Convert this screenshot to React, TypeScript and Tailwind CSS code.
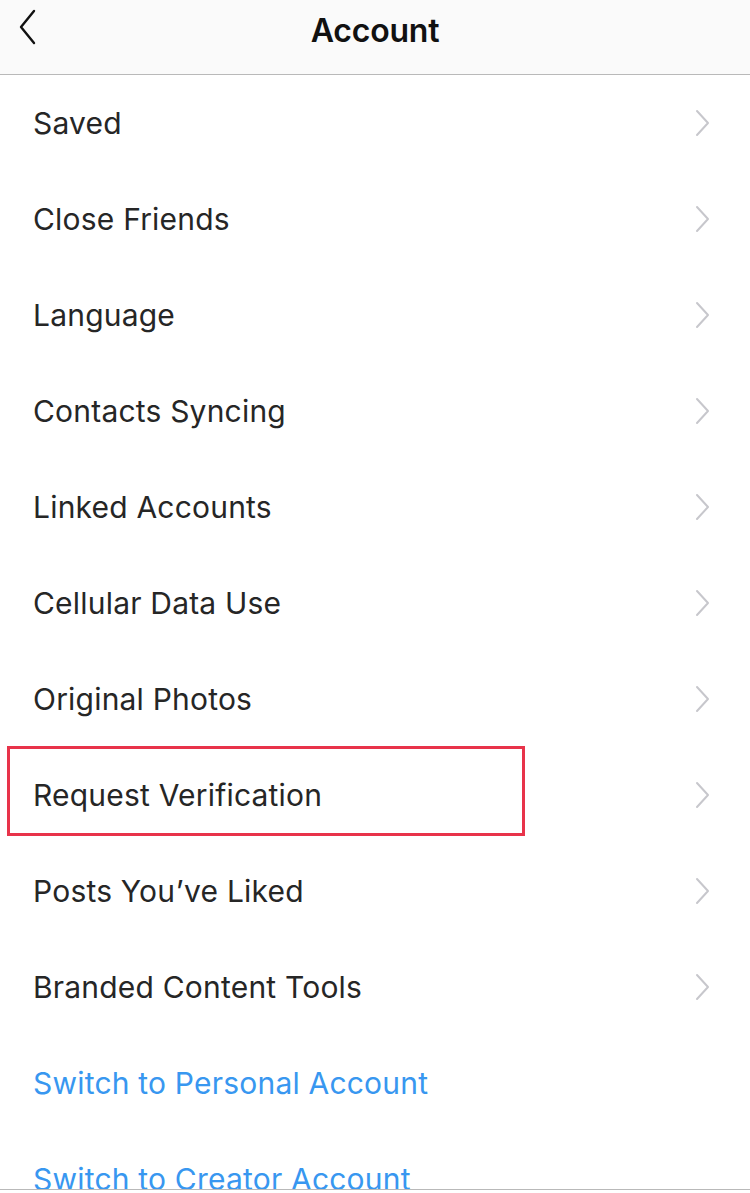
import React from "react";

const items = [
  "Saved",
  "Close Friends",
  "Language",
  "Contacts Syncing",
  "Linked Accounts",
  "Cellular Data Use",
  "Original Photos",
  "Request Verification",
  "Posts You’ve Liked",
  "Branded Content Tools",
];

function Chevron() {
  return (
    <svg width="16" height="28" viewBox="0 0 16 28" className="mr-[40px]">
      <path d="M3 2 L14 14 L3 26" fill="none" stroke="#c7c7cc" strokeWidth="2" strokeLinecap="round" strokeLinejoin="round" />
    </svg>
  );
}

export default function App() {
  return (
    <div
      className="relative w-[750px] h-[1193px] overflow-hidden bg-white text-[#262626]"
      style={{ fontFamily: 'Inter, "Liberation Sans", Arial, sans-serif' }}
    >
      <div className="relative h-[75px] bg-[#fafafa] border-b border-[#b9b9b9] flex items-center justify-center">
        <svg width="20" height="38" viewBox="0 0 20 38" className="absolute left-[18px] top-[9px]">
          <path d="M16 2 L3 18 L16 34" fill="none" stroke="#111" strokeWidth="2.4" strokeLinecap="round" strokeLinejoin="round" />
        </svg>
        <span className="text-[32px] font-semibold text-[#111] mb-[13px] tracking-[-0.2px]">Account</span>
      </div>
      <div className="flex flex-col">
        {items.map((t) => (
          <div key={t} className="relative h-[96px] flex items-center justify-between pl-[33px]">
            <span className="text-[30px] leading-none tracking-[0.2px]">{t}</span>
            <Chevron />
            {t === "Request Verification" && (
              <div className="absolute left-[7px] top-[-1px] w-[518px] h-[90px] border-[3px] border-[#e8334a]" />
            )}
          </div>
        ))}
        <div className="h-[96px] flex items-center pl-[33px]">
          <span className="text-[30px] leading-none tracking-[0.2px] text-[#3897f0]">Switch to Personal Account</span>
        </div>
        <div className="h-[96px] flex items-center pl-[33px]">
          <span className="text-[30px] leading-none tracking-[0.2px] text-[#3897f0]">Switch to Creator Account</span>
        </div>
      </div>
      <div className="absolute left-0 right-0 bottom-0 h-[4px] bg-white border-t border-[#b9b9b9]" />
    </div>
  );
}
